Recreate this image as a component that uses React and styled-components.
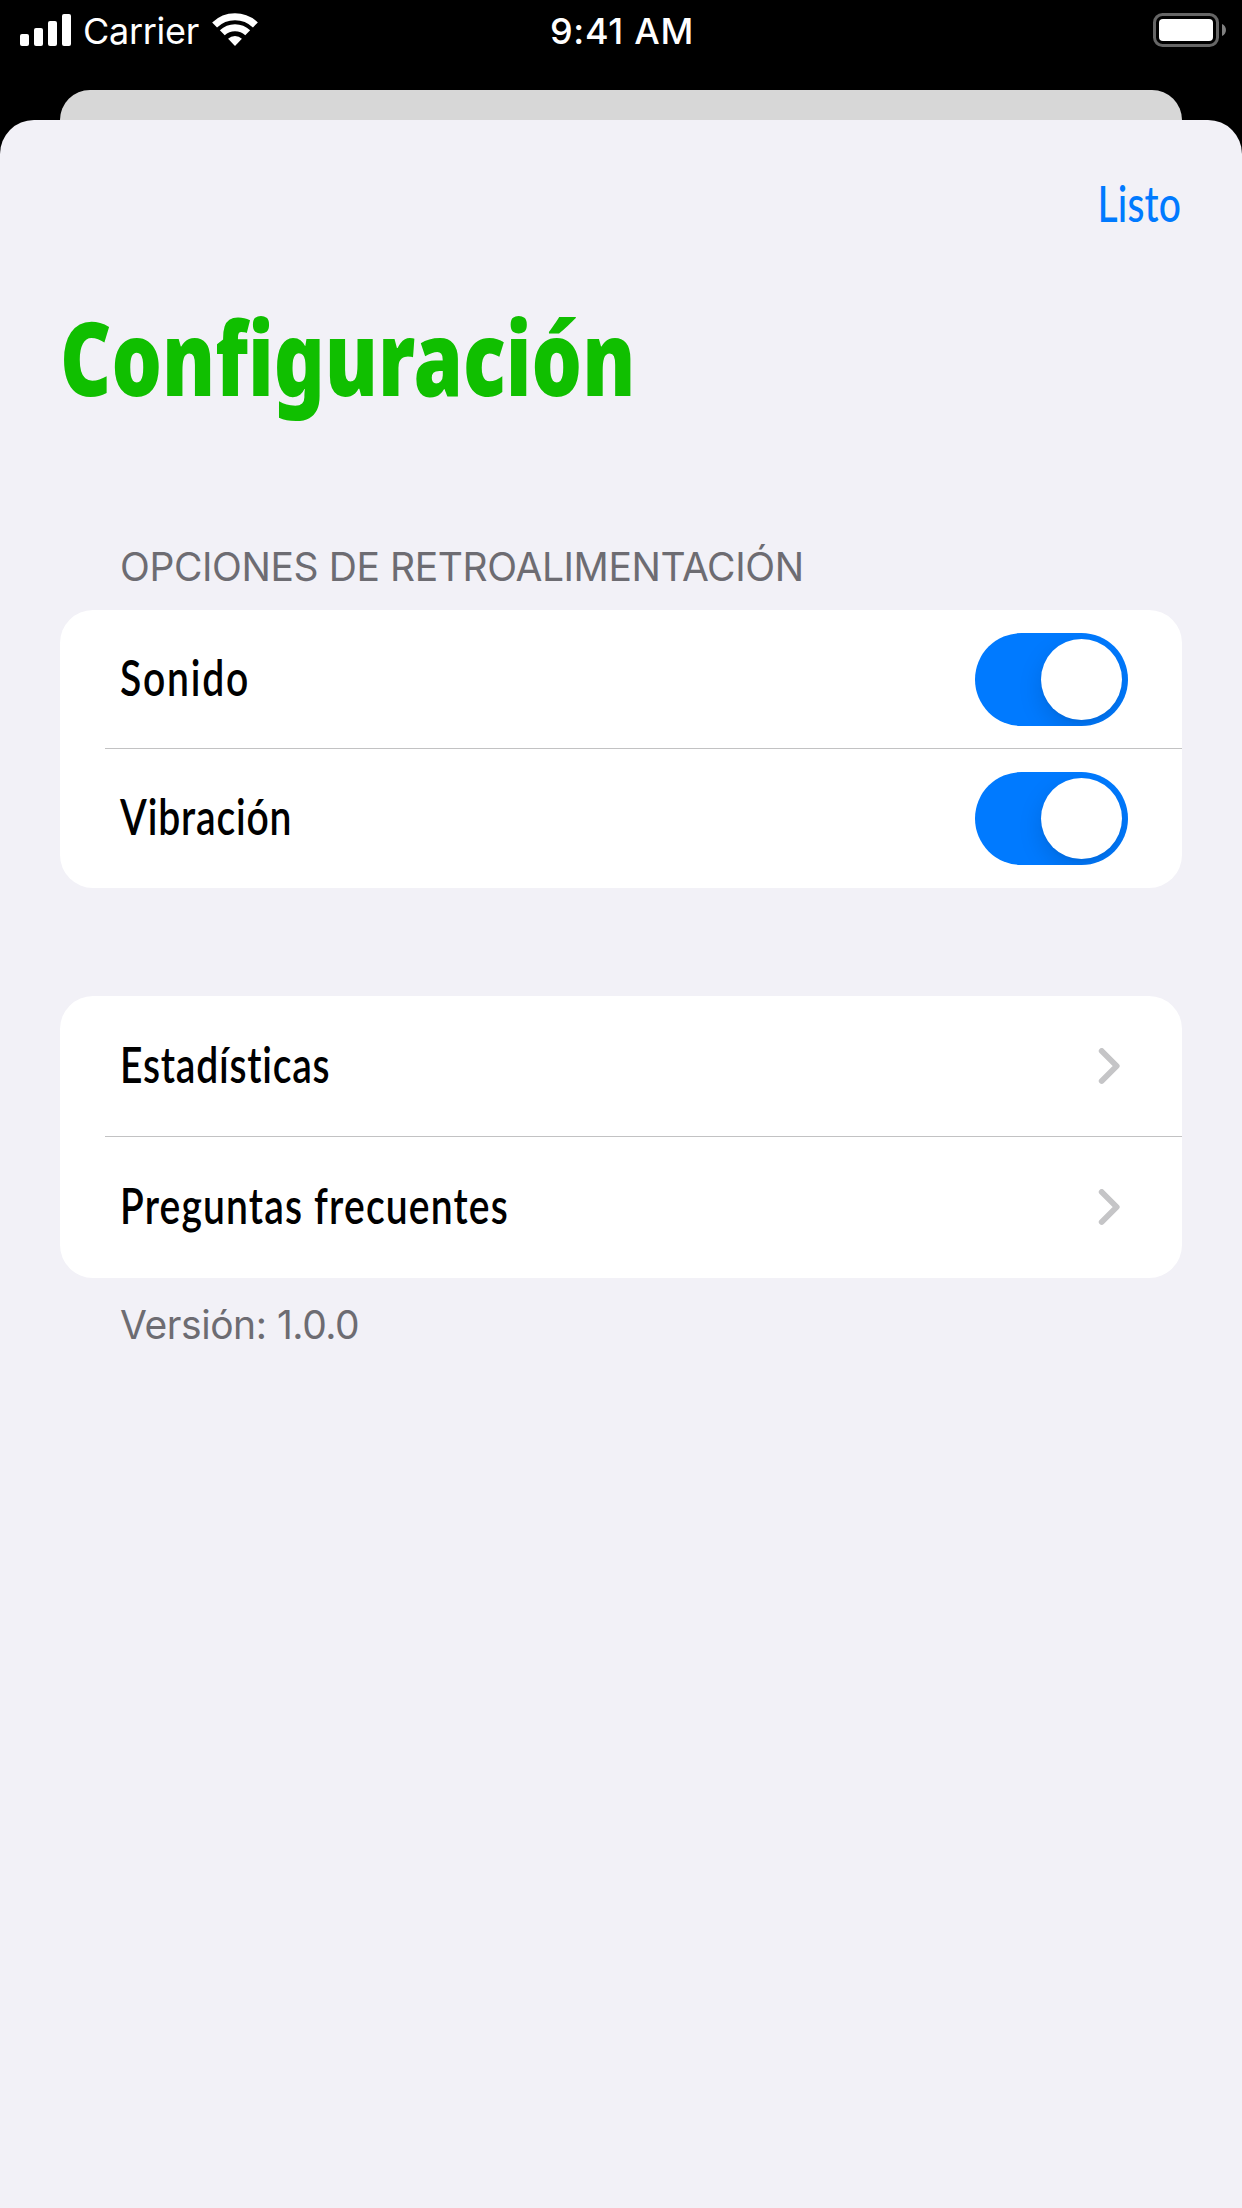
import React, { useState } from "react";
import styled, { createGlobalStyle } from "styled-components";

const GlobalStyle = createGlobalStyle`
  * { box-sizing: border-box; }
  body {
    margin: 0;
    background: #000;
    font-family: Inter, "Liberation Sans", sans-serif;
    -webkit-font-smoothing: antialiased;
  }
`;

const Screen = styled.div`
  display: flex;
  flex-direction: column;
  min-height: 2208px;
  background: #000;
`;

const StatusBar = styled.header`
  display: grid;
  grid-template-columns: 1fr auto 1fr;
  align-items: center;
  height: 60px;
  padding: 0 16px 0 20px;
  color: #fff;
`;

const StatusGroup = styled.div`
  display: flex;
  align-items: center;
  justify-content: ${(p) => (p.$end ? "flex-end" : "flex-start")};
`;

const Carrier = styled.span`
  padding: 1px 0 0 12px;
  margin-right: 13px;
  font-size: 36px;
  line-height: 44px;
  letter-spacing: -0.3px;
`;

const Clock = styled.time`
  padding: 1px 2px 0 0;
  font-size: 36px;
  font-weight: 500;
  line-height: 44px;
  letter-spacing: 0.7px;
`;

const PreviousCard = styled.div`
  height: 30px;
  margin: 30px 60px 0;
  border-radius: 31px 31px 0 0;
  background: #d7d7d7;
`;

const Sheet = styled.main`
  display: flex;
  flex: 1;
  flex-direction: column;
  padding: 53px 60px 0;
  border-radius: 34px 34px 0 0;
  background: #f2f1f7;
`;

const NavBar = styled.nav`
  display: flex;
  justify-content: flex-end;
  padding-right: 1px;
`;

const Condensed = styled.span`
  display: block;
  font-family: Lato, "Open Sans", sans-serif;
  font-size: 50px;
  font-weight: ${(p) => p.$weight || 600};
  line-height: 60px;
  white-space: nowrap;
  font-variant-ligatures: none;
  letter-spacing: ${(p) => p.$tracking || 0}px;
  transform: scaleX(0.78);
  transform-origin: ${(p) => (p.$alignEnd ? "right" : "left")} center;
`;

const DoneButton = styled.button`
  padding: 0;
  border: 0;
  background: none;
  color: #007aff;
  cursor: pointer;
`;

const Title = styled.h1`
  margin: 64px 0 0;
  color: #10bf00;
  font-family: "Noto Sans", "Open Sans", sans-serif;
  font-size: 102px;
  font-weight: 900;
  line-height: 120px;
  white-space: nowrap;
  font-variant-ligatures: none;
  transform: scaleX(0.778);
  transform-origin: left center;
`;

const SectionHeader = styled.h2`
  margin: 126px 0 19px;
  padding-left: 60px;
  color: #6d6c72;
  font-size: 39px;
  font-weight: 400;
  line-height: 48px;
  letter-spacing: -0.4px;
  text-transform: uppercase;
`;

const Group = styled.section`
  border-radius: 33px;
  background: #fff;
  overflow: hidden;
  margin-top: ${(p) => p.$gap || 0}px;
`;

const Row = styled.div`
  display: flex;
  align-items: center;
  justify-content: space-between;
  height: ${(p) => p.$height}px;
  padding: 0 ${(p) => p.$inset}px 0 60px;
  color: #000;
`;

const RowLabel = styled.div`
  padding-bottom: 5px;
`;

const Divider = styled.hr`
  height: 1px;
  margin: -1px 0 0 45px;
  border: 0;
  background: #c2c2c3;
`;

const Switch = styled.button`
  display: flex;
  align-items: center;
  justify-content: ${(p) => (p.$on ? "flex-end" : "flex-start")};
  width: 153px;
  height: 93px;
  padding: 6px;
  border: 0;
  border-radius: 47px;
  background: ${(p) => (p.$on ? "#007aff" : "#e9e9ea")};
  overflow: hidden;
  cursor: pointer;
`;

const Knob = styled.span`
  width: 81px;
  height: 81px;
  border-radius: 50%;
  background: #fff;
  box-shadow: 0 9px 24px rgba(0, 0, 0, 0.13), 0 3px 3px rgba(0, 0, 0, 0.03);
`;

const Footer = styled.footer`
  margin-top: 23px;
  padding-left: 60px;
  color: #6d6c72;
  font-size: 39px;
  line-height: 48px;
  letter-spacing: -0.45px;
`;

const SignalIcon = () => (
  <svg width="51" height="32" viewBox="0 0 51 32" fill="#fff">
    <rect x="0" y="20" width="9" height="12" rx="2" />
    <rect x="14" y="14" width="9" height="18" rx="2" />
    <rect x="28" y="7" width="9" height="25" rx="2" />
    <rect x="42" y="0" width="9" height="32" rx="2" />
  </svg>
);

const WifiIcon = () => (
  <svg width="46" height="34" viewBox="0 0 46 34" fill="none" stroke="#fff" strokeWidth="7">
    <path d="M2.6 11.9A29.3 29.3 0 0 1 43.4 11.9" />
    <path d="M10.3 19.8A18.3 18.3 0 0 1 35.7 19.8" />
    <path d="M23 33L16.1 25.8A10 10 0 0 1 29.9 25.8Z" fill="#fff" stroke="none" />
  </svg>
);

const BatteryIcon = () => (
  <svg width="73" height="34" viewBox="0 0 73 34" fill="none">
    <rect x="1.5" y="1.5" width="63" height="31" rx="8" stroke="#666" strokeWidth="3" />
    <rect x="6" y="6" width="54" height="22" rx="4" fill="#fff" />
    <path d="M69 11C74.3 13 74.3 21 69 23Z" fill="#808080" />
  </svg>
);

const ChevronIcon = () => (
  <svg width="22" height="37" viewBox="0 0 22 37" fill="none">
    <path
      d="M3.7 3L18.7 18L3.7 33"
      stroke="#c5c5c7"
      strokeWidth="5.8"
      strokeLinecap="round"
      strokeLinejoin="round"
    />
  </svg>
);

function ToggleRow({ label, tracking }) {
  const [on, setOn] = useState(true);
  return (
    <Row $height={139} $inset={54}>
      <RowLabel>
        <Condensed $tracking={tracking}>{label}</Condensed>
      </RowLabel>
      <Switch type="button" role="switch" aria-checked={on} $on={on} onClick={() => setOn(!on)}>
        <Knob />
      </Switch>
    </Row>
  );
}

function LinkRow({ label, tracking }) {
  return (
    <Row $height={141} $inset={62}>
      <RowLabel>
        <Condensed $tracking={tracking}>{label}</Condensed>
      </RowLabel>
      <ChevronIcon />
    </Row>
  );
}

export default function App() {
  return (
    <Screen>
      <GlobalStyle />
      <StatusBar>
        <StatusGroup>
          <SignalIcon />
          <Carrier>Carrier</Carrier>
          <WifiIcon />
        </StatusGroup>
        <Clock>9:41 AM</Clock>
        <StatusGroup $end>
          <BatteryIcon />
        </StatusGroup>
      </StatusBar>
      <PreviousCard />
      <Sheet>
        <NavBar>
          <DoneButton type="button">
            <Condensed $tracking={0.2} $weight={500} $alignEnd>Listo</Condensed>
          </DoneButton>
        </NavBar>
        <Title>Configuración</Title>
        <SectionHeader>Opciones de retroalimentación</SectionHeader>
        <Group>
          <ToggleRow label="Sonido" tracking={2.3} />
          <Divider />
          <ToggleRow label="Vibración" tracking={1.1} />
        </Group>
        <Group $gap={108}>
          <LinkRow label="Estadísticas" tracking={1} />
          <Divider />
          <LinkRow label="Preguntas frecuentes" tracking={1.5} />
        </Group>
        <Footer>Versión: 1.0.0</Footer>
      </Sheet>
    </Screen>
  );
}
